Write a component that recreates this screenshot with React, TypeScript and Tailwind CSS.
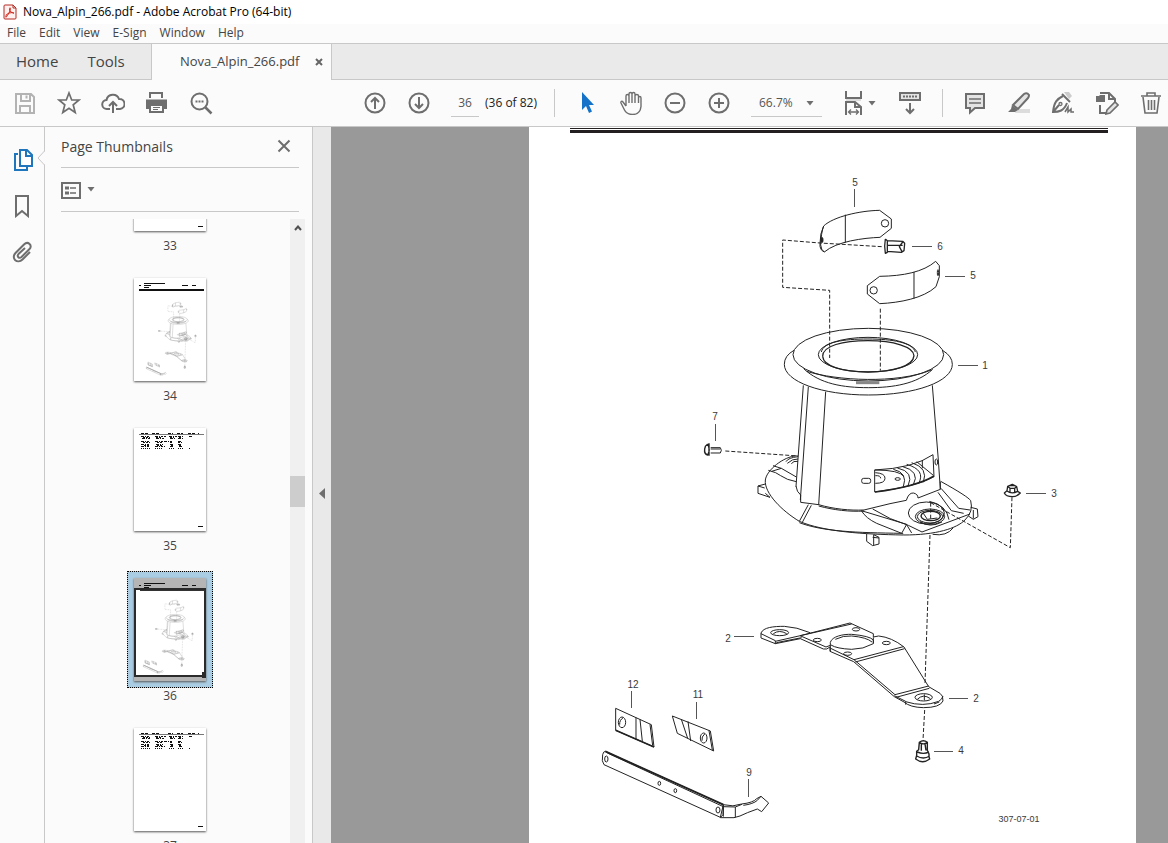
import type { ReactNode } from 'react';
import { useState } from 'react';

type IconProps = { children: ReactNode; className?: string };

function Icon({ children, className = 'text-[#6e6e6e]' }: IconProps) {
  return (
    <svg viewBox="0 0 24 24" className={`h-6 w-6 shrink-0 ${className}`} fill="none" stroke="currentColor" strokeWidth="2" aria-hidden="true">
      {children}
    </svg>
  );
}

function ToolButton({ label, children }: { label: string; children: ReactNode }) {
  return (
    <button type="button" aria-label={label} className="flex h-6 shrink-0 items-center hover:bg-gray-200">
      {children}
    </button>
  );
}

function Caret() {
  return (
    <svg viewBox="0 0 8 5" className="h-[5px] w-2 shrink-0" aria-hidden="true">
      <path d="M.5 0h7L4 4.500z" fill="#6e6e6e" />
    </svg>
  );
}

const callouts = [
  { n: '5', x: 855, y: 186, line: 'M854.500 189v18' },
  { n: '6', x: 940, y: 250, line: 'M912 246.500h20' },
  { n: '5', x: 973, y: 279, line: 'M945 276.500h20' },
  { n: '1', x: 985, y: 369, line: 'M958 365.500h20' },
  { n: '7', x: 715, y: 420, line: 'M715.500 424v17' },
  { n: '3', x: 1054, y: 497, line: 'M1026 493.500h20' },
  { n: '2', x: 728, y: 642, line: 'M734 636.500h20' },
  { n: '2', x: 976, y: 702, line: 'M949 698.500h19' },
  { n: '4', x: 961, y: 754, line: 'M934 751.500h19' },
  { n: '12', x: 633, y: 688, line: 'M631.500 691v17' },
  { n: '11', x: 698, y: 698, line: 'M696.500 702v17' },
  { n: '9', x: 749, y: 776, line: 'M748.500 779v18' },
];

// Exploded view of the winch base. Each group has its own origin, three units to one page unit.
function PartsDrawing({ weight = 3, dash = '12 6' }: { weight?: number; dash?: string }) {
  return (
    <g fill="none" stroke="currentColor" strokeWidth={weight} strokeLinejoin="round">
      <g transform="translate(770 170) scale(.333333)">
        <path d="M161 168C190 140 270 122 329 121L364 147V175L330 202C280 204 200 214 163 246Q148 240 150 220Q150 190 161 168z" />
        <path d="M226 134V218M161 168Q153 190 152 225Q153 240 163 246" />
        <circle cx="345" cy="160" r="11" />
        <ellipse cx="156" cy="210" rx="3" ry="8" fill="currentColor" />
        <path d="M352 212L398 214L404 220L402 242L394 247L352 244M354 226h44M398 216L388 230L396 245M346 207L352 212V247L346 250Q342 228 346 207" strokeWidth={weight * 1.3} />
        <path d="M329 319C400 318 460 306 497 274L508 287V320L498 350C460 385 390 398 329 401L292 372V347z" />
        <path d="M432 306V386" />
        <circle cx="311" cy="361" r="11" />
        <ellipse cx="504" cy="308" rx="2" ry="9" />
        <path d="M335 230L150 219L38 210V352L179 361V564M331 416V602" strokeDasharray={dash} />
        <ellipse cx="295" cy="554" rx="226" ry="79" />
        <path d="M72 541Q43 557 43 583C43 635 155 675 295 675S547 635 547 583Q547 559 519 542" />
        <path d="M101 596C150 642 220 653 295 653S440 642 488 598M110 604C200 632 380 642 484 600" />
        <ellipse cx="294" cy="554" rx="149" ry="52" />
        <path d="M154 546C160 516 220 507 294 507S428 518 436 546" />
        <path d="M158 559C158 527 218 512 294 512S431 530 432 557C430 588 370 606 294 606S160 589 158 559" strokeWidth={weight * 1.3} />
        <path d="M258 638h70" strokeWidth={weight * 3} stroke="#888" />
      </g>
      <g transform="translate(690 380) scale(.333333)">
        <path d="M340 16L318 320M355 20L331 360M407 35L386 375M727 16L745 240L751 328" />
        <path d="M318 318Q320 336 332 345V367L386 374C430 387 480 392 522 390L600 371L649 361Q656 338 670 339Q684 342 684 354L751 328V305" />
        <path d="M386 378C430 390 480 396 522 393M320 227C280 230 230 270 226 300C222 340 278 394 328 424C400 455 520 463 640 465C740 465 800 445 825 420Q851 395 842 362Q835 350 752 304" />
        <path d="M328 428C400 455 500 458 635 460L650 433L514 392Q528 415 560 430L640 462M548 387Q600 420 655 436L696 456L840 402M328 424L355 374M337 427L364 376M650 434L665 459" />
        <path d="M235 271Q260 277 272 287Q290 300 319 305M249 257L274 265L319 291M274 265L245 274M744 337L784 392L821 400M753 325L806 385L840 390" />
        <path d="M226 312L204 318V340L240 352L226 340M204 318L224 324M530 461V484L548 497L567 492V472L551 464V495M548 472L567 474M842 382L862 387L864 410L850 418L835 408M850 390V416M728 463Q770 470 790 443" />
        <ellipse cx="709" cy="399" rx="54" ry="33" />
        <path d="M777 419Q770 375 718 364" />
        <ellipse cx="720" cy="410" rx="44" ry="23" />
        <ellipse cx="720" cy="410" rx="38" ry="19" />
        <ellipse cx="722" cy="408" rx="29" ry="14" strokeWidth={weight * 1.4} />
        <path d="M690 425Q720 445 756 426M700 400l12 18l30 -4" />
        <path d="M554 270Q670 265 729 224L732 290Q680 320 554 336z" />
        <path d="M555 336Q680 320 732 288" strokeWidth={weight * 1.6} />
        <path d="M556 278Q586 280 585 295Q585 310 556 310M556 287Q572 286 572 295M610 268Q655 278 640 320M622 264Q674 275 654 318M636 259Q692 274 670 314M650 253Q708 270 686 310M665 248Q716 264 700 307M680 245L730 286M697 240V265M554 270Q630 270 642 290" />
        <ellipse cx="623" cy="297" rx="8" ry="4" />
        <rect x="515" y="295" width="27" height="15" rx="6" />
        <ellipse cx="739" cy="246" rx="4" ry="9" />
        <path d="M288 245Q295 233 324 230M292 250Q307 236 324 237M304 251Q310 242 324 244" />
        <path d="M62 203H91Q97 211 91 219H62M62 207h28" />
        <path d="M53 192Q62 210 53 225Q42 222 44 207Q45 197 53 192M57 190V227" strokeWidth={weight * 1.4} />
        <path d="M106 213L325 228M722 368L961 503L966 350M722 368V420" strokeDasharray={dash} />
        <path d="M953 319L967 313L980 320L983 334L991 339Q980 350 967 350Q948 350 943 339L951 332zM953 319L960 325H974L980 320M960 325V338M974 325V338M951 333Q965 344 983 334M958 317h18" strokeWidth={weight * 1.3} />
      </g>
      <g transform="translate(710 600) scale(.333333)">
        <path d="M271 107L420 69L490 101V111L506 108Q545 112 582 141L656 260L690 280Q700 286 699 303Q690 323 640 323Q600 322 582 306L553 290L431 185L360 154V141Q350 150 340 147L271 116L196 131L153 114V99C160 82 190 79 223 79Q260 81 300 98" />
        <path d="M196 124L425 72M196 122L153 101M196 122V132M199 128L275 113M270 107L348 141L361 136M432 179L580 140M436 186L584 146M362 145L432 179L555 284L656 258M558 292L658 265M553 287L587 304V314M587 305Q640 322 686 304Q697 298 699 288M672 312L688 306" />
        <path d="M361 154V127C366 109 400 102 425 103Q480 108 490 120V131Q460 148 425 148Q380 146 363 135M490 112V130M376 118Q400 106 425 108Q470 112 486 126" />
        <ellipse cx="209" cy="98" rx="27" ry="9" />
        <path d="M190 101Q208 88 230 101" />
        <ellipse cx="322" cy="120" rx="12" ry="5" />
        <ellipse cx="438" cy="88" rx="11" ry="5" />
        <ellipse cx="413" cy="161" rx="12" ry="5" />
        <ellipse cx="529" cy="129" rx="12" ry="5" />
        <ellipse cx="641" cy="292" rx="26" ry="11" />
        <path d="M622 298Q640 280 661 296M643 283v18" />
        <path d="M660 -195L645 250M644 330L639 420" strokeDasharray={dash} />
        <path d="M628 427Q640 417 652 427V451L657 462V470L659 477Q638 493 617 477L620 466V454L626 449zM628 428Q640 435 652 428M634 432V452M645 432L648 451M622 456Q640 464 657 456M620 468Q640 480 659 468" strokeWidth={weight * 1.4} />
      </g>
      <g transform="translate(580 660) scale(.333333)">
        <path d="M107 145L214 194L222 261L107 211zM168 173V238M180 178L187 244M210 193L218 257" />
        <path d="M107 211L222 261" strokeWidth={weight * 1.6} />
        <ellipse cx="126" cy="187" rx="11" ry="16" />
        <path d="M130 173Q118 180 119 194" />
        <path d="M277 168L391 213L401 273L292 220zM304 178L323 235M324 184L332 243M387 212L397 270" />
        <ellipse cx="371" cy="234" rx="10" ry="15" />
        <path d="M374 222Q364 230 366 242" />
        <path d="M76 274L430 434L421 472L72 314Q64 305 68 284Q70 274 76 274zM82 279L430 440" />
        <path d="M76 274L430 434" strokeWidth={weight * 1.8} />
        <ellipse cx="79" cy="297" rx="5" ry="9" />
        <ellipse cx="238" cy="370" rx="4" ry="6" />
        <ellipse cx="286" cy="392" rx="4" ry="6" />
        <ellipse cx="414" cy="450" rx="6" ry="9" />
        <path d="M430 434Q460 442 485 432Q520 428 530 416L543 409L566 429L545 455L532 447Q500 458 480 468L462 473H421L429 464zM430 440L466 441V472M466 441L486 433M490 436Q520 432 532 421L543 409M430 438V470" />
      </g>
    </g>
  );
}

function PageDrawing() {
  return (
    <svg viewBox="529 127 607 716" className="block w-full text-[#222]" role="img" aria-label="Parts drawing 307-07-01">
      <path d="M570 128.500h538" stroke="#231f20" />
      <path d="M570 131.500h538" stroke="#231f20" strokeWidth="3" />
      <PartsDrawing />
      <g fontFamily="Liberation Sans, Arial, sans-serif" fontSize="10" fill="#3a3a3a" textAnchor="middle">
        {callouts.map((c) => (
          <g key={`${c.n}-${c.y}`}>
            <path d={c.line} stroke="#555" />
            <text x={c.x} y={c.y}>{c.n}</text>
          </g>
        ))}
        <text x="1019" y="822" fontSize="9">307-07-01</text>
      </g>
    </svg>
  );
}

function ThumbHeading() {
  return (
    <g fill="#111">
      <path d="M5 7h2v1H5zM10 5h21v1H10zM10 7h7v1h-7zM10 9h5v1h-5zM48 7h6v1h-6zM58 7h4v1h-4z" />
    </g>
  );
}

function TableThumb() {
  return (
    <g stroke="#111">
      <path d="M5 6.500h65" stroke="#777" />
      <path d="M7 5.500h7M18 5.500h8M34 5.500h5M43 5.500h6M54 5.500h7M64 5.500h1" strokeDasharray="3 1" />
      <path d="M7 8.500h9M21 8.500h11M35 8.500h14M55 8.500h3M8 10.500h8M22 10.500h9M36 10.500h5M44 10.500h5M7 13.500h9M21 13.500h17M44 13.500h4M7 16.500h9M22 16.500h7M36 16.500h4M44 16.500h4M7 18.500h9M21 18.500h10M36 18.500h3M45 18.500h4" strokeDasharray="3 1 1 1 2 1" />
      <path d="M9 9.500h7M22 9.500h6M36 9.500h4M45 9.500h3M9 14.500h7M23 14.500h5M36 14.500h3M44 14.500h4M10 17.500h6M23 17.500h6M37 17.500h2M45 17.500h3" strokeDasharray="2 1" />
      <path d="M7 20.500h9M21 20.500h7M35 20.500h6M44 20.500h5M55 20.500h1" strokeDasharray="1 1" />
      <path d="M64 98.500h5" />
    </g>
  );
}

const pages = [
  { number: 33, kind: 'table' },
  { number: 34, kind: 'drawing' },
  { number: 35, kind: 'table' },
  { number: 36, kind: 'drawing' },
  { number: 37, kind: 'table' },
];

function Thumbnail({ number, kind, selected, onSelect }: { number: number; kind: string; selected: boolean; onSelect: () => void }) {
  return (
    <li className="flex h-[150px] flex-col items-center">
      <button
        type="button"
        onClick={onSelect}
        aria-label={`Page ${number}`}
        className={`border border-dotted p-1.5 ${selected ? 'border-black bg-[#abcde3]' : 'border-transparent'}`}
      >
        <svg viewBox="0 0 72 103" className={`block h-[103px] w-[72px] shadow-[0_1px_2px_#555] ${selected ? 'bg-[#b5b5b5]' : 'bg-white'}`} aria-hidden="true">
          {kind === 'table' && <TableThumb />}
          {kind === 'drawing' && <ThumbHeading />}
          {kind === 'drawing' && !selected && (
            <>
              <path d="M5 11h65v2H5z" fill="#111" />
              <g transform="translate(-60 -1) scale(.12)" className="text-[#999]">
                <PartsDrawing weight={8} dash="20 20" />
              </g>
            </>
          )}
          {selected && (
            <>
              <path d="M1 11h70v87H1z" fill="#fff" stroke="#2b2b2b" strokeWidth="2" />
              <path d="M6 12.500h65" stroke="#333" />
              <g transform="translate(-63 -3) scale(.12)" className="text-[#999]">
                <PartsDrawing weight={8} dash="20 20" />
              </g>
              <path d="M68 94h6v6h-6z" fill="#2b2b2b" />
            </>
          )}
        </svg>
      </button>
      <span className="text-[12px] leading-4 text-[#444]">{number}</span>
    </li>
  );
}

function Toolbar() {
  const [page, setPage] = useState('36');
  return (
    <div className="flex h-[47px] shrink-0 items-center gap-5 border-b border-[#c8c8c8] bg-[#fbfbfb] pr-1 pl-[13px]">
      <ToolButton label="Save">
        <Icon className="text-[#b3b3b3]">
          <path d="M3 3h15l3 3v16H3zM8 3v7h9V3M7 22v-7h10v7" />
          <path d="M13.500 4.500v3" />
        </Icon>
      </ToolButton>
      <ToolButton label="Star">
        <Icon>
          <path d="M12 2l2.700 7H22l-5.800 4.800 2 7.700L12 17.200l-6.200 4.300 2-7.700L2 9h7.300z" strokeWidth="1.700" />
        </Icon>
      </ToolButton>
      <ToolButton label="Share">
        <Icon>
          <path d="M9 18H6a4.500 4.500 0 0 1-.5-9A6.500 6.500 0 0 1 18 8a5 5 0 0 1 1 10h-4M12 22V11M8 15l4-4 4 4" />
        </Icon>
      </ToolButton>
      <ToolButton label="Print">
        <Icon>
          <path d="M4 1h14v6H4zM1 8.500h21v9.500h-3v-4H4v4H1z" fill="currentColor" stroke="none" />
          <path d="M5 14h13v7H5z" fill="#fbfbfb" />
          <path d="M6 3h10v4H6z" fill="#fbfbfb" stroke="none" />
          <path d="M8 16.500h7M8 18.500h5" strokeWidth="1" />
        </Icon>
      </ToolButton>
      <ToolButton label="Find">
        <Icon>
          <circle cx="10.500" cy="10.500" r="8" />
          <path d="M16.500 16.500l6 6" strokeWidth="2.500" />
          <path d="M6.500 10.500h8" strokeDasharray="2 1" />
        </Icon>
      </ToolButton>

      <div className="ml-[130px] flex gap-5">
        <ToolButton label="Previous page">
          <Icon>
            <circle cx="12" cy="12" r="9.500" />
            <path d="M12 18V7M8 11l4-4 4 4" />
          </Icon>
        </ToolButton>
        <ToolButton label="Next page">
          <Icon>
            <circle cx="12" cy="12" r="9.500" />
            <path d="M12 6v11M8 13l4 4 4-4" />
          </Icon>
        </ToolButton>
      </div>
      <div className="flex w-[83px] shrink-0 items-center gap-1.5 text-[12px] text-[#222]">
        <input
          aria-label="Page number"
          value={page}
          onChange={(e) => setPage(e.target.value)}
          className="h-[27px] w-7 border-b border-[#c8c8c8] bg-transparent text-center text-[#555] outline-none"
        />
        <span className="whitespace-nowrap">(36 of 82)</span>
      </div>
      <div className="h-7 w-px shrink-0 bg-[#c8c8c8]" />
      <ToolButton label="Select">
        <Icon className="text-[#1473c8]">
          <path d="M7 1v18l4-4 3 7 3-1.500-3-6.500h5z" fill="currentColor" stroke="none" />
        </Icon>
      </ToolButton>
      <ToolButton label="Pan">
        <Icon>
          <path d="M7 15L4 11c-1-1.500-2.500-.5-2 1l3.500 7c2 4 5 4.500 8 4.500 5 0 8-3 8.500-8V7c0-2-2.500-2-2.500 0v5M7 15V5c0-2 3-2 3 0v7M10 12V3c0-2 3-2 3 0v9M13 12V3c0-2 3-2 3 0v9M16 5c0-2 3.500-2 3.500 0v7" strokeWidth="1.400" />
        </Icon>
      </ToolButton>
      <ToolButton label="Zoom out">
        <Icon>
          <circle cx="12" cy="12" r="9.500" />
          <path d="M7 12h10" />
        </Icon>
      </ToolButton>
      <ToolButton label="Zoom in">
        <Icon>
          <circle cx="12" cy="12" r="9.500" />
          <path d="M7 12h10M12 7v10" />
        </Icon>
      </ToolButton>
      <div className="relative flex w-[71px] shrink-0 items-center">
        <select aria-label="Zoom level" defaultValue="66.7%" className="h-[27px] w-full appearance-none border-b border-[#c8c8c8] bg-transparent pl-2 text-[12px] text-[#555]">
          <option>66.7%</option>
          <option>100%</option>
        </select>
        <span className="pointer-events-none absolute right-2">
          <Caret />
        </span>
      </div>
      <button type="button" aria-label="Fit width" className="flex w-9 shrink-0 items-center gap-0.5">
        <Icon>
          <path d="M4 0v7h15V0" />
          <path d="M4 9h15" stroke="#ddd" />
          <path d="M4 24V11h9l6 5v8M13 11v5h6" />
          <path d="M6.500 21h10M9 18.500L6.500 21 9 23.500M14 18.500l2.500 2.500-2.500 2.500" strokeWidth="1.300" />
        </Icon>
        <Caret />
      </button>
      <ToolButton label="Scrolling">
        <Icon>
          <path d="M2 2h20v7H2z" fill="#e4e4e4" />
          <path d="M5 5.500h14" strokeDasharray="2 1" />
          <path d="M12 12v10M8 18l4 4 4-4" />
        </Icon>
      </ToolButton>
      <div className="h-7 w-px shrink-0 bg-[#c8c8c8]" />
      <ToolButton label="Comment">
        <Icon>
          <path d="M3 3h18v14h-9l-5 4.500V17H3z" fill="#e4e4e4" />
          <path d="M6 8h12M6 12h12" strokeWidth="1.400" />
        </Icon>
      </ToolButton>
      <ToolButton label="Highlight">
        <Icon>
          <path d="M10 18h13v4H8z" fill="#dcdcdc" stroke="none" />
          <path d="M6 14L17 3q3-2 5 1 0 2-1 3L11 18z" fill="#e4e4e4" />
          <path d="M5 14l6 5-3 2H1l3-3z" fill="currentColor" stroke="none" />
        </Icon>
      </ToolButton>
      <ToolButton label="Sign">
        <Icon>
          <path d="M13 1h5l3 4-3 3z" fill="#ccc" stroke="none" />
          <path d="M11 3l8 8" />
          <path d="M12 5C6 8 3 11 2 21c6 0 11-1 14-9M2 21l6-7" />
          <circle cx="9.500" cy="13" r="1.500" strokeWidth="1.300" />
          <path d="M14 21l3-5v5l3-3v3h3" strokeWidth="1.500" />
        </Icon>
      </ToolButton>
      <ToolButton label="Edit document">
        <Icon>
          <path d="M5 2h9l6 6v4M14 2v6h6M5 14v8h7" />
          <path d="M1 5h3l1-1h5v7H1z" fill="currentColor" stroke="none" />
          <path d="M12 19l8-8 3 3-8 8-4 1z" fill="#e4e4e4" strokeWidth="1.600" />
        </Icon>
      </ToolButton>
      <ToolButton label="Delete">
        <Icon>
          <path d="M2 5h20M8 5V2h8v3M4 6l2 16h12l2-16M9.500 9v10M12.500 9v10M15.500 9v10" strokeWidth="1.600" />
        </Icon>
      </ToolButton>
    </div>
  );
}

export default function App() {
  const [selectedPage, setSelectedPage] = useState(36);

  return (
    <div className="flex h-screen flex-col overflow-hidden bg-[#fbfbfb] font-['Open_Sans','Noto_Sans',sans-serif] text-[#444]">
      <header className="flex h-6 shrink-0 items-center gap-1.5 bg-white pl-[3px] text-[12px] text-black">
        <svg viewBox="0 0 14 16" className="h-4 w-3.5" fill="none" aria-hidden="true">
          <path d="M2 1h8l3 3v10q0 1-1 1H2q-1 0-1-1V2q0-1 1-1z" fill="#fff1ef" stroke="#b52b22" />
          <path d="M10 1v3h3" stroke="#b52b22" />
          <path d="M3 12q-1-1 3-3 5-1 5 0t-3-1Q6 6 6.500 4.500t1 0Q7 8 4.500 11.500T3 12z" stroke="#d3291c" />
        </svg>
        <h1>Nova_Alpin_266.pdf - Adobe Acrobat Pro (64-bit)</h1>
      </header>
      <nav className="flex h-[19px] shrink-0 items-start gap-[13px] pl-[7px] text-[12px]">
        {['File', 'Edit', 'View', 'E-Sign', 'Window', 'Help'].map((item) => (
          <button key={item} type="button" className="leading-[18px]">{item}</button>
        ))}
      </nav>

      <div className="flex h-[37px] shrink-0 border-t border-[#c8c8c8]">
        <div className="flex w-[152px] shrink-0 items-center gap-[29px] border-r border-b border-[#c8c8c8] bg-[#eaeaea] pl-4 text-[15px]">
          <button type="button">Home</button>
          <button type="button">Tools</button>
        </div>
        <div className="flex w-[180px] shrink-0 items-center justify-between border-r border-[#c8c8c8] pr-2 pl-7 text-[13px]">
          <span>Nova_Alpin_266.pdf</span>
          <button type="button" aria-label="Close tab">
            <svg viewBox="0 0 8 8" className="h-2 w-2" aria-hidden="true">
              <path d="M1 1l6 6M7 1L1 7" stroke="#666" strokeWidth="2" />
            </svg>
          </button>
        </div>
        <div className="flex-1 border-b border-[#c8c8c8] bg-[#eaeaea]" />
      </div>

      <Toolbar />

      <div className="flex min-h-0 flex-1">
        <aside className="relative flex w-[45px] shrink-0 flex-col items-center gap-[22px] border-r border-[#c8c8c8] pt-[21px]">
          <ToolButton label="Page thumbnails">
            <Icon className="text-[#1f76bd]">
              <path d="M8 6H5v16h12v-4" />
              <path d="M10 2h7l5 5v11H10zM16 2v6h6" fill="#fff" />
            </Icon>
          </ToolButton>
          <ToolButton label="Bookmarks">
            <Icon>
              <path d="M6 2h12v20l-6-5-6 5z" />
            </Icon>
          </ToolButton>
          <ToolButton label="Attachments">
            <Icon>
              <path d="M20 12l-7.500 7.500c-5 5-12-1-7-6.500L14 4.500c4-4 9 1 5.500 4.500l-8 8c-2.500 2-5-.5-3-3L15 8" />
            </Icon>
          </ToolButton>
          <svg viewBox="0 0 8 16" className="absolute top-[23px] -right-px h-4 w-2" aria-hidden="true">
            <path d="M8 1L1 8l7 7z" fill="#fbfbfb" />
            <path d="M7.500 1L1 8l6.500 7" fill="none" stroke="#c8c8c8" />
          </svg>
        </aside>

        <section className="flex w-[267px] shrink-0 flex-col">
          <div className="mr-[13px] ml-4 flex h-[41px] shrink-0 items-center justify-between border-b border-[#c8c8c8] pr-2 pb-0.5">
            <h2 className="text-[14px]">Page Thumbnails</h2>
            <button type="button" aria-label="Close panel">
              <svg viewBox="0 0 14 14" className="h-3.5 w-3.5" aria-hidden="true">
                <path d="M1.500 1.500l11 11M12.500 1.500l-11 11" stroke="#6e6e6e" strokeWidth="2" />
              </svg>
            </button>
          </div>
          <div className="mr-[13px] ml-4 flex h-11 shrink-0 items-center border-b border-[#c8c8c8]">
            <button type="button" aria-label="Thumbnail options" className="flex items-center gap-1.5">
              <svg viewBox="0 0 20 18" className="h-[18px] w-5" fill="none" stroke="#6e6e6e" strokeWidth="2" aria-hidden="true">
                <path d="M1 2h18v15H1z" />
                <path d="M9 7h6M9 12h6" strokeWidth="1.500" />
                <path d="M4 7h4M4 12h4" strokeWidth="3" />
              </svg>
              <Caret />
            </button>
          </div>
          <div className="mt-[7px] flex min-h-0 flex-1 overflow-hidden pr-[7px]">
            <ul className="-mt-[98px] flex-1 pl-[5px]">
              {pages.map((p) => (
                <Thumbnail
                  key={p.number}
                  number={p.number}
                  kind={p.kind}
                  selected={p.number === selectedPage}
                  onSelect={() => setSelectedPage(p.number)}
                />
              ))}
            </ul>
            <div className="flex w-[15px] shrink-0 flex-col bg-[#f0f0f0]">
              <button type="button" aria-label="Scroll up" className="flex h-[18px] items-center justify-center">
                <svg viewBox="0 0 8 6" className="h-1.5 w-2" fill="none" aria-hidden="true">
                  <path d="M1 5l3-3.500L7 5" stroke="#505050" strokeWidth="2" />
                </svg>
              </button>
              <div className="mt-[239px] h-[31px] bg-[#cdcdcd]" />
            </div>
          </div>
        </section>

        <button type="button" aria-label="Collapse panel" className="flex w-[19px] shrink-0 items-center justify-center border-l border-[#c8c8c8] bg-[#e9e9e9] pt-4">
          <svg viewBox="0 0 6 11" className="h-[11px] w-1.5" aria-hidden="true">
            <path d="M6 0v11L0 5.500z" fill="#6e6e6e" />
          </svg>
        </button>

        <main className="min-w-0 flex-1 overflow-hidden bg-[#999] pr-8 pl-[198px]">
          <div className="min-h-full bg-white">
            <PageDrawing />
          </div>
        </main>
      </div>
    </div>
  );
}
